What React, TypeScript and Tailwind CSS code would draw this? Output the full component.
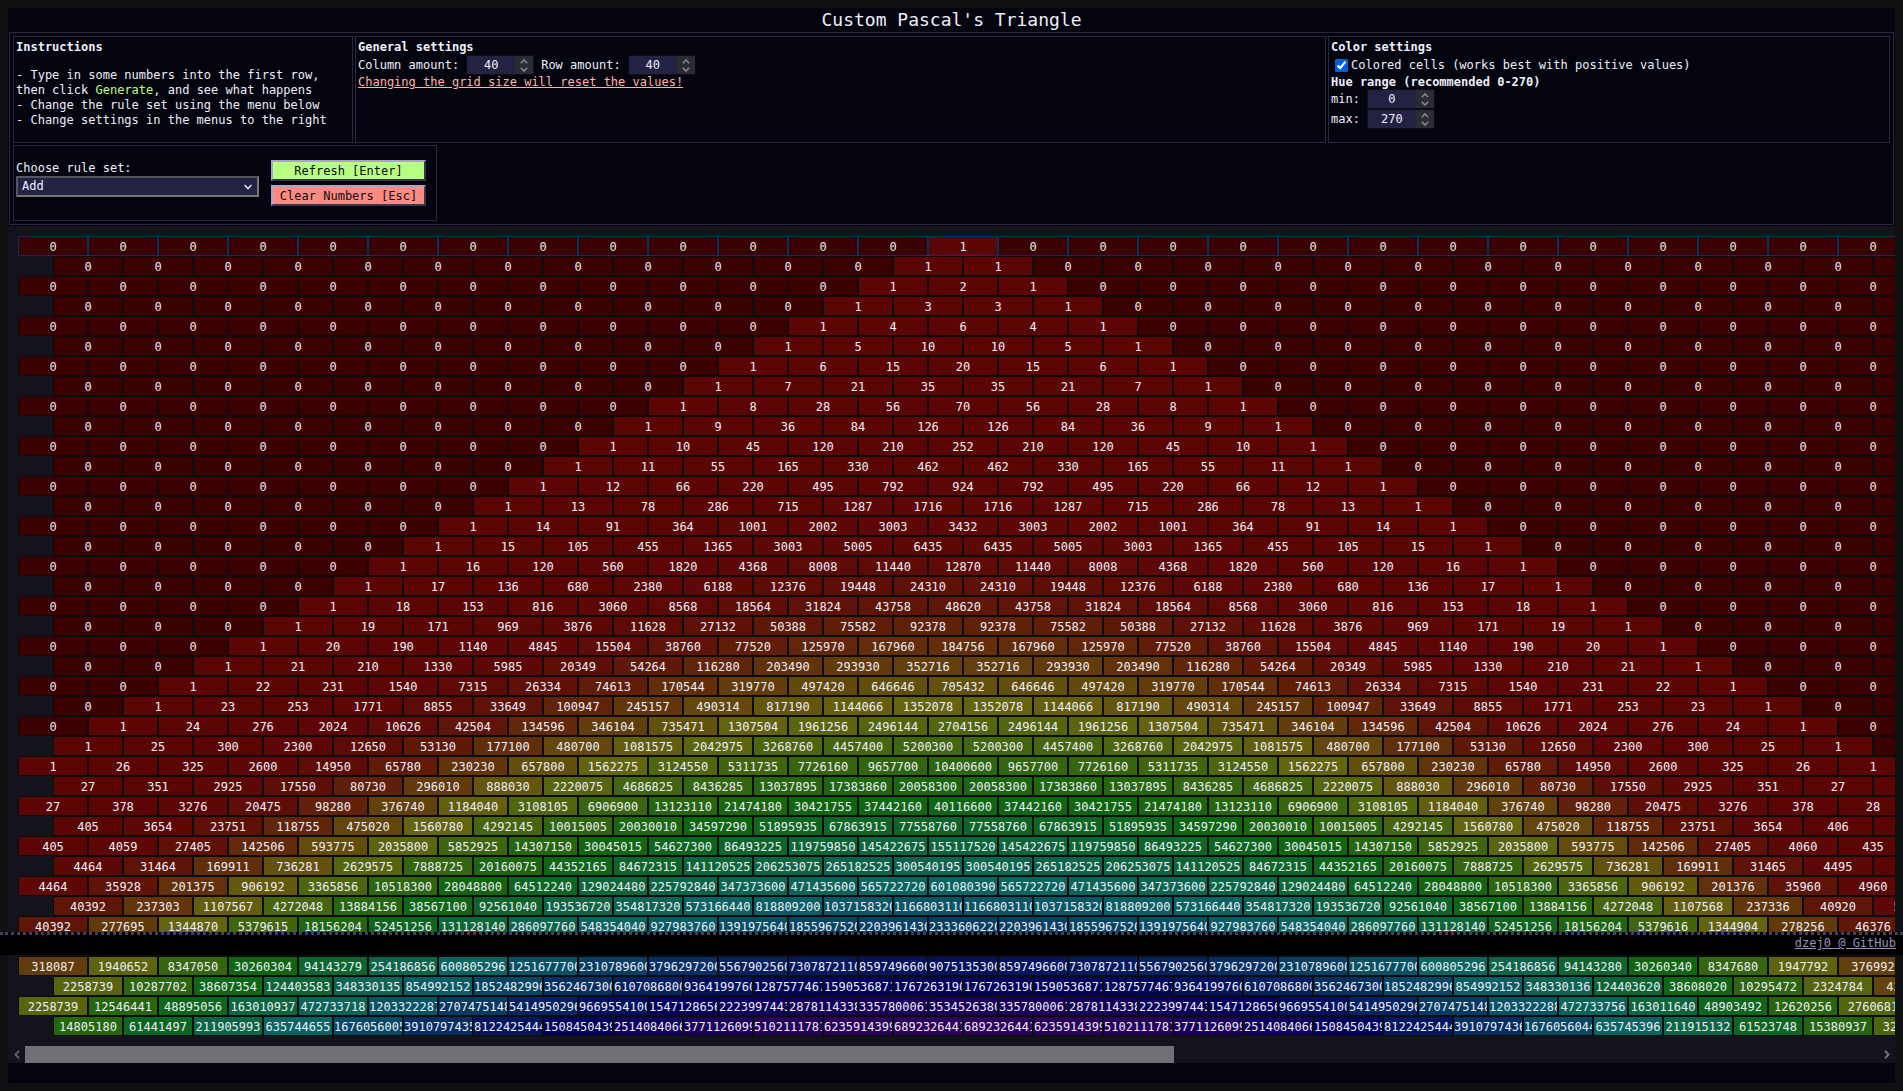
import { useMemo, useState } from "react";

const MAX_COLUMNS = 40;
const START_COLUMN = 13;

function buildTriangle(columns: number, rows: number): number[][] {
  const first = Array.from({ length: columns }, (_, i) => (i === START_COLUMN ? 1 : 0));
  const grid: number[][] = [first];
  for (let r = 1; r < rows; r++) {
    const prev = grid[r - 1];
    const shift = r % 2 === 1 ? 1 : -1;
    grid.push(prev.map((value, c) => value + (prev[c + shift] ?? 0)));
  }
  return grid;
}

function cellColor(value: number, max: number, hueMin: number, hueMax: number): string {
  if (value === 0) return "#3b0000";
  const t = Math.log(1 + (1e6 * value) / max) / Math.log(1 + 1e6);
  const hue = hueMin + (hueMax - hueMin) * t;
  // Hues between red and blue are a little lighter and less saturated.
  const lift = Math.sin((Math.PI * Math.min(Math.max(hue, 0), 240)) / 240) ** 0.6;
  const saturation = 90 - 20 * lift + hue / 27;
  const lightness = 19 + 4.5 * lift - hue / 180;
  return `hsl(${hue} ${saturation}% ${lightness}%)`;
}

function Panel({ className = "", children }: { className?: string; children: React.ReactNode }) {
  return <section className={`border border-[#29283c] px-0.5 ${className}`}>{children}</section>;
}

function NumberField({ id, value, onChange }: { id: string; value: number; onChange: (n: number) => void }) {
  return (
    <span className="inline-flex h-5 w-[68px] border border-[#0d0d12] bg-[#242242]">
      <input
        id={id}
        type="number"
        value={value}
        onChange={(e) => onChange(Number(e.target.value))}
        className="w-0 grow appearance-none text-center text-[#eeeefa] outline-none [appearance:textfield] [&::-webkit-inner-spin-button]:appearance-none"
      />
      <span className="flex w-[18px] flex-col items-center justify-center gap-[3px] bg-[#2b2b33]">
        <button type="button" aria-label="Increase" onClick={() => onChange(value + 1)}>
          <svg width="8" height="5" viewBox="0 0 8 5" className="block fill-none stroke-[#85858c] stroke-[1.6]">
            <path d="M0.8 4.3 L4 1 L7.2 4.3" />
          </svg>
        </button>
        <button type="button" aria-label="Decrease" onClick={() => onChange(value - 1)}>
          <svg width="8" height="5" viewBox="0 0 8 5" className="block fill-none stroke-[#85858c] stroke-[1.6]">
            <path d="M0.8 0.7 L4 4 L7.2 0.7" />
          </svg>
        </button>
      </span>
    </span>
  );
}

export default function App() {
  const [columns, setColumns] = useState(MAX_COLUMNS);
  const [rows, setRows] = useState(40);
  const [hueMin, setHueMin] = useState(0);
  const [hueMax, setHueMax] = useState(270);
  const [colored, setColored] = useState(true);

  const grid = useMemo(() => buildTriangle(columns, rows), [columns, rows]);
  const max = useMemo(() => Math.max(1, ...grid.flat()), [grid]);

  return (
    <div className="relative min-h-screen overflow-hidden bg-[#0f1011] p-2 font-['DejaVu_Sans_Mono',monospace] text-[12px] leading-[15px] text-[#eeeefa]">
      <main className="bg-[#04040f] pb-5">
        <h1 className="text-center text-[18px] leading-6">Custom Pascal's Triangle</h1>

        <div className="mx-px mb-px flex flex-col items-start gap-0.5 border border-[#29283c] p-[3px]">
          <div className="grid min-h-[107px] w-full grid-cols-[340px_1fr_562px] gap-0.5">
            <Panel className="pt-[3px]">
              <h2 className="font-bold">Instructions</h2>
              <p className="mt-[13px]">
                - Type in some numbers into the first row,
                <br />
                then click <span className="text-[#b9ff80]">Generate</span>, and see what happens
                <br />- Change the rule set using the menu below
                <br />- Change settings in the menus to the right
              </p>
            </Panel>
            <Panel className="pt-[3px]">
              <h2 className="font-bold">General settings</h2>
              <div className="flex h-5 items-center gap-[7px]">
                <label htmlFor="columns">Column amount:</label>
                <NumberField id="columns" value={columns} onChange={setColumns} />
                <label htmlFor="rows">Row amount:</label>
                <NumberField id="rows" value={rows} onChange={setRows} />
              </div>
              <p className="text-[#ffb3a6] underline">Changing the grid size will reset the values!</p>
            </Panel>
            <Panel className="pt-[3px]">
              <h2 className="font-bold">Color settings</h2>
              <div className="flex h-5 items-center gap-[3px] pl-1">
                <input
                  id="colored"
                  type="checkbox"
                  checked={colored}
                  onChange={(e) => setColored(e.target.checked)}
                  className="size-[13px] accent-[#0060df]"
                />
                <label htmlFor="colored">Colored cells (works best with positive values)</label>
              </div>
              <h3 className="leading-[14px] font-bold">Hue range (recommended 0-270)</h3>
              <div className="flex h-5 items-center gap-[7px]">
                <label htmlFor="hue-min">min:</label>
                <NumberField id="hue-min" value={hueMin} onChange={setHueMin} />
              </div>
              <div className="flex h-5 items-center gap-[7px]">
                <label htmlFor="hue-max">max:</label>
                <NumberField id="hue-max" value={hueMax} onChange={setHueMax} />
              </div>
            </Panel>
          </div>

          <Panel className="flex min-h-[76px] w-[424px] items-center gap-3">
            <div className="flex w-[243px] flex-col pb-2">
              <label htmlFor="rule">Choose rule set:</label>
              <div className="relative flex">
                <select
                  id="rule"
                  defaultValue="Add"
                  className="h-[21px] w-full appearance-none border-2 border-t-[#55555c] border-r-[#77777c] border-b-[#77777c] border-l-[#55555c] bg-[#242242] px-1 text-[#eeeefa]"
                >
                  <option>Add</option>
                  <option>Subtract</option>
                  <option>Multiply</option>
                </select>
                <svg
                  width="8"
                  height="6"
                  viewBox="0 0 8 6"
                  className="pointer-events-none absolute top-2 right-[7px] fill-none stroke-[#eeeefa] stroke-[1.4]"
                >
                  <path d="M0.7 1 L4 4.6 L7.3 1" />
                </svg>
              </div>
            </div>
            <div className="flex w-[155px] flex-col gap-1 text-[#0b0b12]">
              <button
                type="button"
                className="h-[21px] border-2 border-t-[#a6a3cc] border-r-[#37354f] border-b-[#37354f] border-l-[#a6a3cc] bg-[#b9ff80] pt-px leading-4"
              >
                Refresh [Enter]
              </button>
              <button
                type="button"
                className="h-[21px] border-2 border-t-[#a6a3cc] border-r-[#37354f] border-b-[#37354f] border-l-[#a6a3cc] bg-[#ff8a80] pt-px leading-4"
              >
                Clear Numbers [Esc]
              </button>
            </div>
          </Panel>
        </div>

        <div className="overflow-hidden bg-[#13131c]">
          <div className="p-2.5">
            {grid.map((row, r) => (
              <div key={r} className={r % 2 === 1 ? "flex pl-[35px]" : "flex"}>
                {row.map((value, c) => (
                  <input
                    key={c}
                    aria-label={`Row ${r + 1}, column ${c + 1}`}
                    value={value}
                    readOnly
                    className={`h-5 w-[70px] shrink-0 border pt-0.5 text-center outline-none ${
                      r === 0 ? "border-[#003263]" : "border-[#0c0c0e]"
                    }`}
                    style={{ backgroundColor: colored ? cellColor(value, max, hueMin, hueMax) : "#242242" }}
                  />
                ))}
              </div>
            ))}
          </div>
          <div className="flex h-[17px] items-stretch bg-[#13131c]">
            <button type="button" aria-label="Scroll left" className="flex w-[17px] items-center justify-center">
              <svg width="6" height="9" viewBox="0 0 6 9" className="fill-none stroke-[#5c5c62] stroke-2">
                <path d="M5 0.8 L1.5 4.5 L5 8.2" />
              </svg>
            </button>
            <div className="grow">
              <div className="h-full w-[62%] bg-[#717076]" />
            </div>
            <button type="button" aria-label="Scroll right" className="flex w-[17px] items-center justify-center">
              <svg width="6" height="9" viewBox="0 0 6 9" className="fill-none stroke-[#717076] stroke-2">
                <path d="M1 0.8 L4.5 4.5 L1 8.2" />
              </svg>
            </button>
          </div>
        </div>
      </main>

      <footer className="absolute inset-x-0 top-[932px] h-[23px] border-t-3 border-dotted border-[#414060] bg-black pt-px pr-[7px] text-right">
        <a href="https://github.com/dzej0" className="text-[#9490b8] underline">
          dzej0 @ GitHub
        </a>
      </footer>
    </div>
  );
}
